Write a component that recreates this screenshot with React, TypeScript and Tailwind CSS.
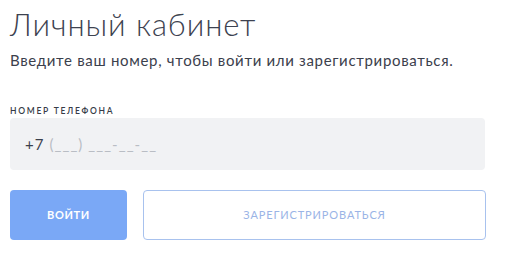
export default function App() {
  return (
    <div className="w-[509px] h-[265px] bg-white px-[10px] pt-[4px] font-['Lato','Noto_Sans',sans-serif]">
      <h1 className="text-[31px] leading-[40px] font-light tracking-[0.03em] text-[#3d4250]">Личный кабинет</h1>
      <p className="mt-[6px] text-[15px] leading-[20px] tracking-[0.045em] text-[#3b404c]">
        Введите ваш номер, чтобы войти или зарегистрироваться.
      </p>

      <label className="mt-[36px] block text-[8.5px] leading-[10px] font-semibold uppercase tracking-[0.2em] text-[#363b47]">
        Номер телефона
      </label>
      <div className="mt-[2px] flex h-[52px] w-[475px] items-center rounded-[4px] bg-[#f1f2f4] px-[15px] text-[15px] tracking-[0.07em]">
        <span className="text-[#3b404c]">+7</span>
        <span className="ml-[5px] text-[#b9bdc4]">(___) ___-__-__</span>
      </div>

      <div className="mt-[20px] flex gap-[16px]">
        <button className="h-[50px] w-[117px] rounded-[4px] bg-[#7aa8f6] text-[11px] font-bold uppercase tracking-[0.06em] text-white">
          Войти
        </button>
        <button className="h-[50px] w-[343px] rounded-[4px] border border-[#a8c2ee] bg-white text-[11px] uppercase tracking-[0.08em] text-[#9ab4e6]">
          Зарегистрироваться
        </button>
      </div>
    </div>
  );
}
